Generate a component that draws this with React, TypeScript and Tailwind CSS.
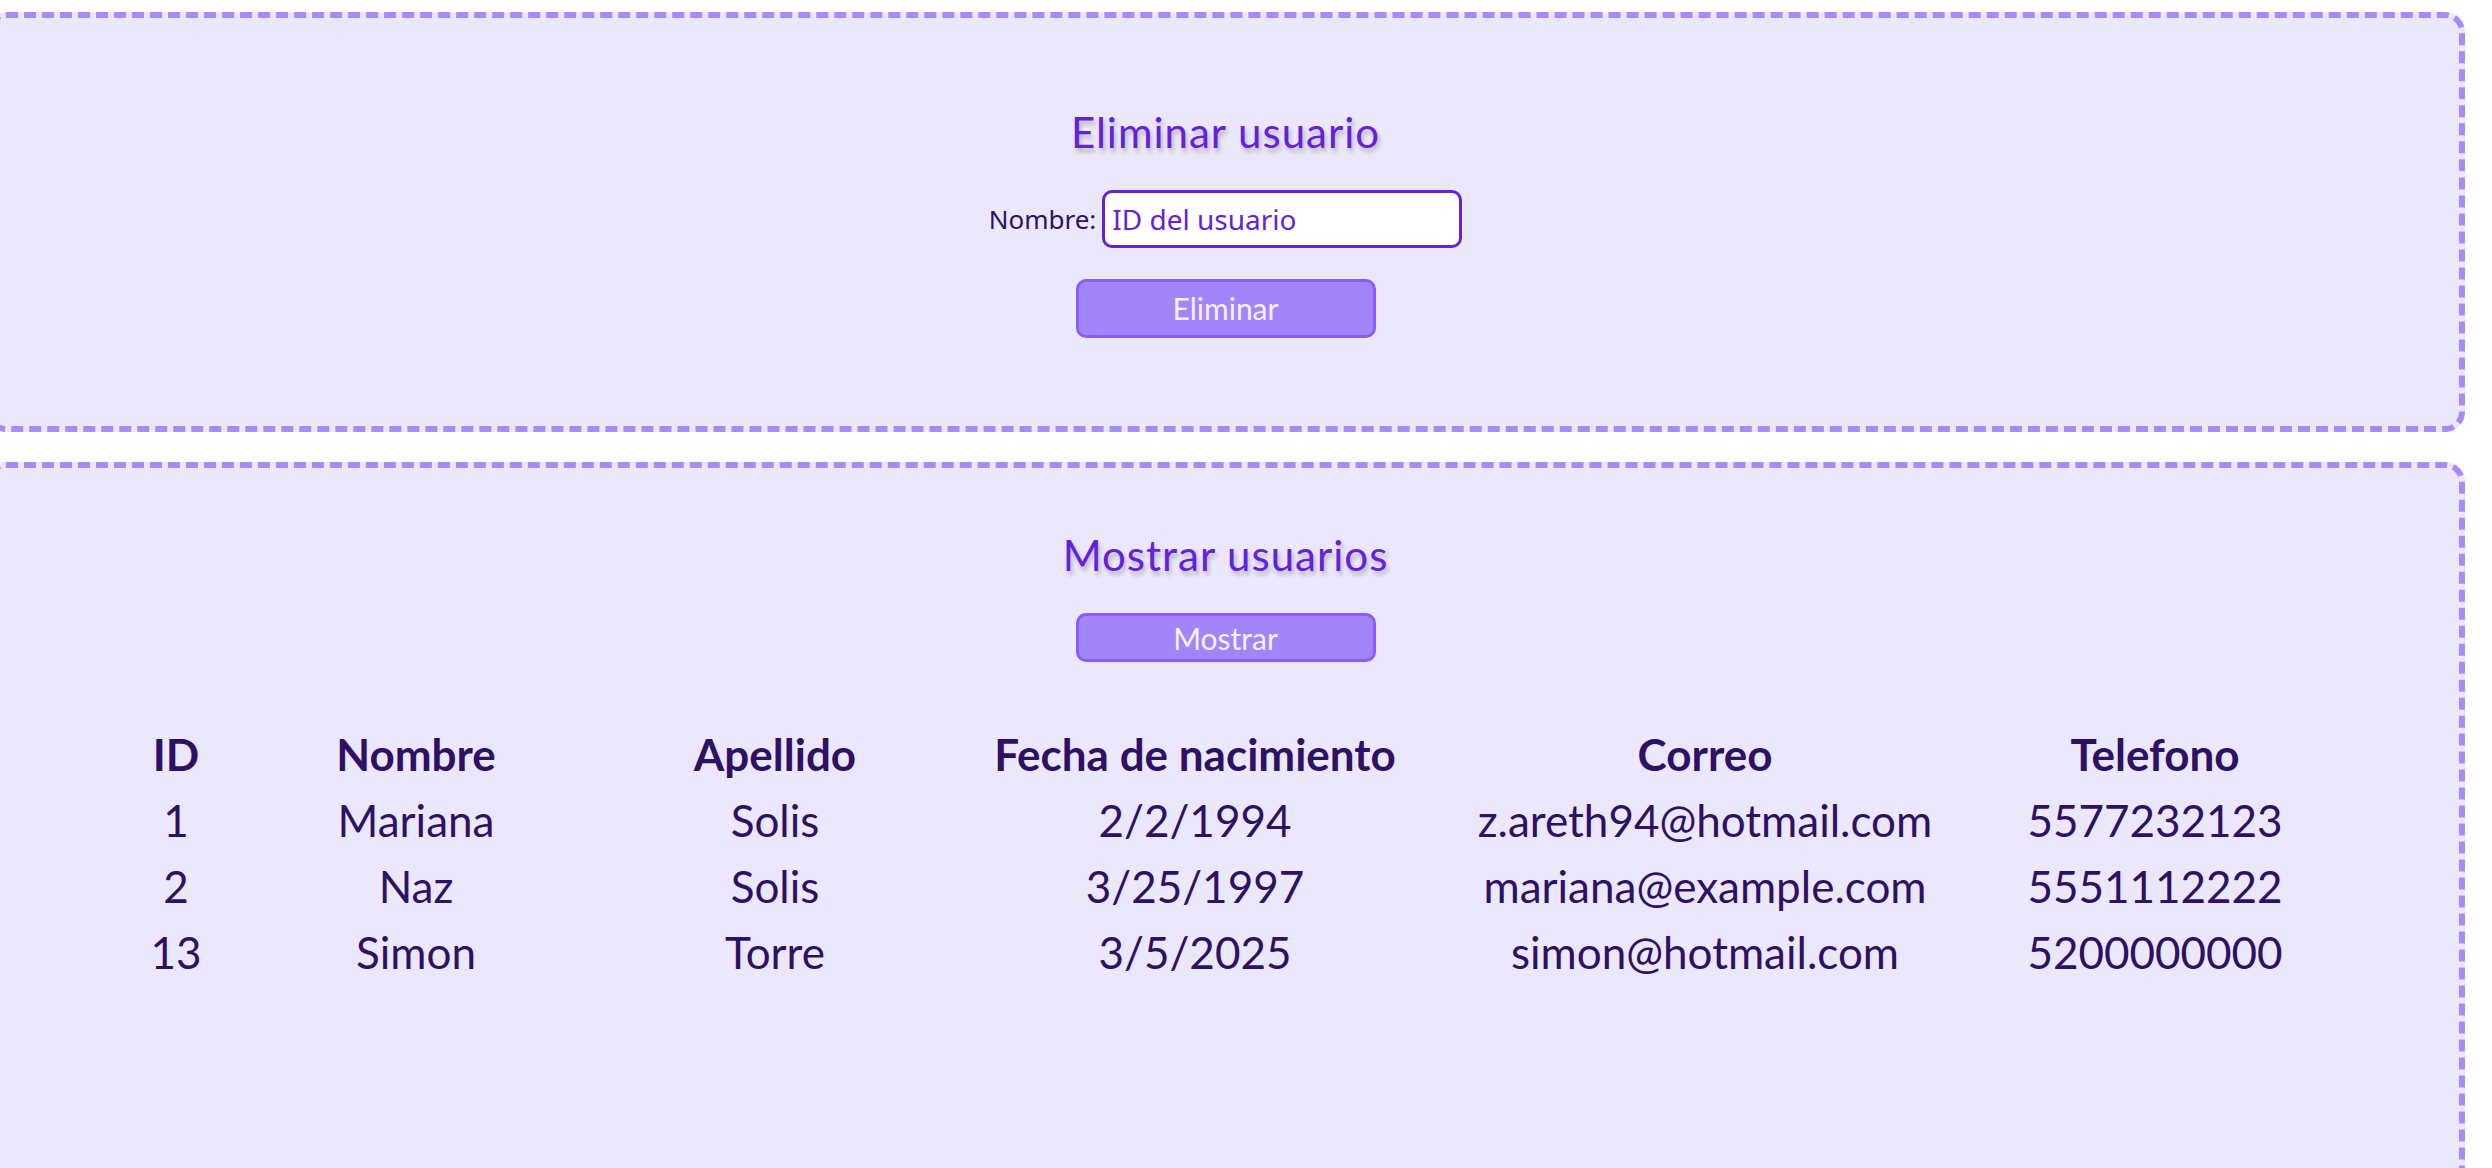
import React from "react";

const rows = [
  { id: "1", nombre: "Mariana", apellido: "Solis", fecha: "2/2/1994", correo: "z.areth94@hotmail.com", tel: "5577232123" },
  { id: "2", nombre: "Naz", apellido: "Solis", fecha: "3/25/1997", correo: "mariana@example.com", tel: "5551112222" },
  { id: "13", nombre: "Simon", apellido: "Torre", fecha: "3/5/2025", correo: "simon@hotmail.com", tel: "5200000000" },
];

const headers = ["ID", "Nombre", "Apellido", "Fecha de nacimiento", "Correo", "Telefono"];

export default function App() {
  return (
    <div className="h-[1168px] overflow-hidden bg-white">
      <div className="ml-[-14px] w-[2479px] pt-[12px] flex flex-col gap-[30px]">
        {/* Eliminar usuario */}
        <section className="rounded-[20px] border-[6px] border-dashed border-[#a78bfa] bg-[#ebe8fb] pt-[90px] pb-[88px] flex flex-col items-center">
          <h2 className="m-0 text-[42px] leading-[48px] tracking-[1px] font-normal text-[#6520dc] [font-family:Lato,'Noto_Sans',sans-serif] [text-shadow:2px_4px_4px_rgba(0,0,0,0.22)]">
            Eliminar usuario
          </h2>
          <div className="mt-[34px] flex items-center gap-[6px]">
            <label className="text-[26px] text-[#2e1065] [font-family:'Noto_Sans',sans-serif]">Nombre:</label>
            <input
              type="text"
              placeholder="ID del usuario"
              className="w-[360px] h-[58px] rounded-[10px] border-[3px] border-[#6520dc] bg-white px-[7px] text-[28px] text-[#6520dc] placeholder:text-[#6520dc] outline-none [font-family:'Noto_Sans',sans-serif]"
            />
          </div>
          <button className="mt-[31px] w-[300px] h-[59px] rounded-[10px] border-[3px] border-[#8b5cf6] bg-[#a385fa] text-[30px] text-[#f5f0ff] [font-family:Lato,sans-serif]">
            Eliminar
          </button>
        </section>

        {/* Mostrar usuarios */}
        <section className="h-[760px] rounded-[20px] border-[6px] border-dashed border-[#a78bfa] bg-[#ebe8fb] pt-[63px] flex flex-col">
          <div className="flex flex-col items-center">
            <h2 className="m-0 text-[42px] leading-[48px] tracking-[1px] font-normal text-[#6520dc] [font-family:Lato,'Noto_Sans',sans-serif] [text-shadow:2px_4px_4px_rgba(0,0,0,0.22)]">
              Mostrar usuarios
            </h2>
            <button className="mt-[34px] w-[300px] h-[49px] rounded-[10px] border-[3px] border-[#8b5cf6] bg-[#a385fa] text-[30px] leading-[36px] text-[#f5f0ff] [font-family:Lato,sans-serif]">
              Mostrar
            </button>
          </div>
          <div className="mt-[59px] ml-[104px] grid grid-cols-[160px_320px_398px_442px_578px_322px] text-[44px] leading-[66px] text-[#2e1065] text-center [font-family:Lato,sans-serif]">
            {headers.map((h) => (
              <div key={h} className="font-bold whitespace-nowrap">{h}</div>
            ))}
            {rows.map((r) => (
              <React.Fragment key={r.id}>
                <div>{r.id}</div>
                <div>{r.nombre}</div>
                <div>{r.apellido}</div>
                <div>{r.fecha}</div>
                <div className="whitespace-nowrap">{r.correo}</div>
                <div>{r.tel}</div>
              </React.Fragment>
            ))}
          </div>
        </section>
      </div>
    </div>
  );
}
